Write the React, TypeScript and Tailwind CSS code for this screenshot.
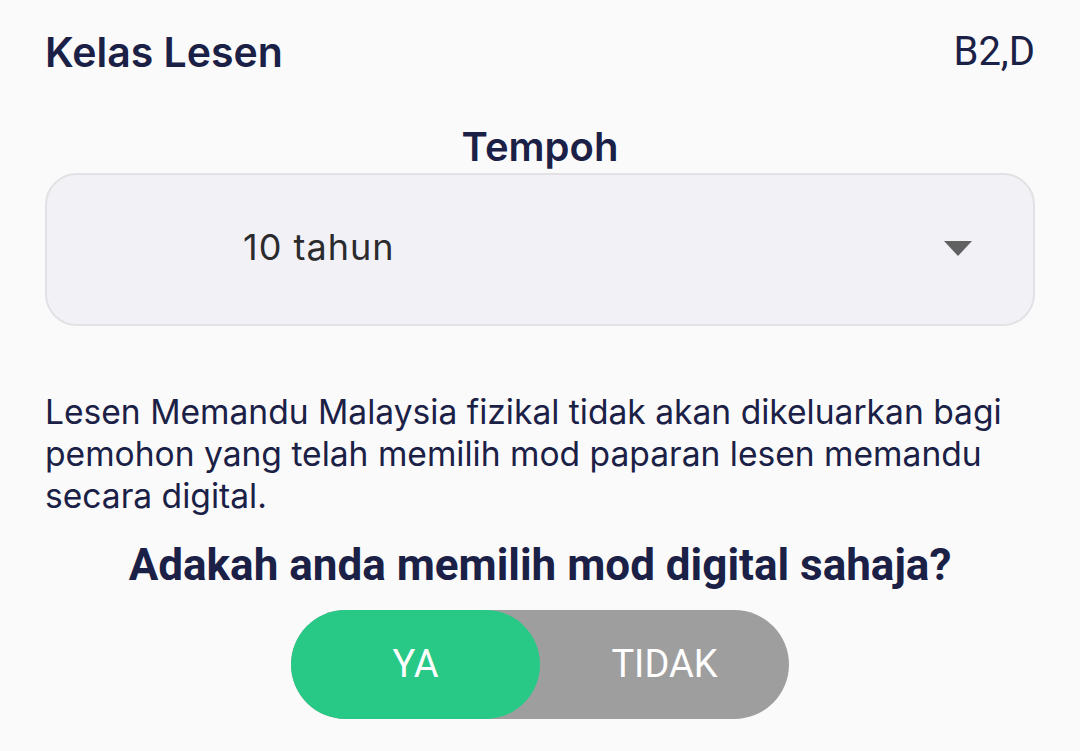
import { useState } from "react";

export default function App() {
  const [digital, setDigital] = useState(true);

  return (
    <div className="min-h-screen bg-[#fafafa] px-[45px] text-[#1b2146] font-['Roboto',sans-serif]">
      <div className="flex items-center justify-between pt-[28px]">
        <span className="font-['Inter',sans-serif] font-semibold text-[41px] leading-[48px]">
          Kelas Lesen
        </span>
        <span className="text-[40px] leading-[48px]">B2,D</span>
      </div>

      <h2 className="mt-[47px] text-center font-['Inter',sans-serif] font-semibold text-[40px] leading-[48px]">
        Tempoh
      </h2>

      <button className="mt-[2px] flex h-[153px] w-full items-center rounded-[32px] border-2 border-[#e2e2e6] bg-[#f2f1f6] pb-[6px] pl-[196px] pr-[61px]">
        <span className="flex-1 text-left font-['Inter',sans-serif] text-[36px] tracking-[1px] text-[#2b2b2e]">
          10 tahun
        </span>
        <svg width="28" height="15" viewBox="0 0 28 15" className="mt-[4px]">
          <path d="M0 0h28L14 15z" fill="#616161" />
        </svg>
      </button>

      <p className="mt-[65px] font-['Inter',sans-serif] text-[33.6px] leading-[42px]">
        Lesen Memandu Malaysia fizikal tidak akan dikeluarkan bagi pemohon yang
        telah memilih mod paparan lesen memandu secara digital.
      </p>

      <h3 className="mt-[23px] text-center text-[44px] leading-[50px] font-bold">
        Adakah anda memilih mod digital sahaja?
      </h3>

      <div className="mt-[20px] flex justify-center">
        <div className="flex h-[109px] w-[498px] rounded-full bg-[#9e9e9e] text-[38px] text-white">
          <button
            onClick={() => setDigital(true)}
            className={`flex-1 rounded-full ${digital ? "bg-[#28c986]" : ""}`}
          >
            YA
          </button>
          <button
            onClick={() => setDigital(false)}
            className={`flex-1 rounded-full ${!digital ? "bg-[#28c986]" : ""}`}
          >
            TIDAK
          </button>
        </div>
      </div>
    </div>
  );
}
